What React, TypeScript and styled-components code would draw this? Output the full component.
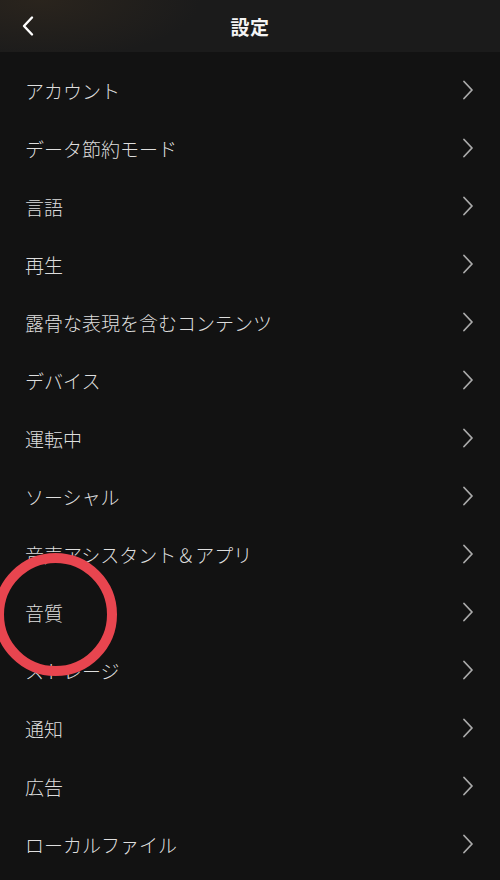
import React, { ReactElement } from 'react';
import styled, { createGlobalStyle } from 'styled-components';

const GlobalStyle = createGlobalStyle`
  html, body {
    margin: 0;
    padding: 0;
    background: #121212;
  }
  body {
    font-family: "Noto Sans CJK JP", "Noto Sans", sans-serif;
  }
`;

const StyledScreen = styled.div`
  position: relative;
  width: 500px;
  height: 880px;
  overflow: hidden;
  background: #121212;
  color: #e6e6e6;
`;

const StyledHeader = styled.header`
  height: 52px;
  display: grid;
  grid-template-columns: 60px 1fr 60px;
  align-items: center;
  background: radial-gradient(ellipse 160px 60px at 40px 0px, #2a241d 0%, rgba(27, 27, 27, 0) 100%), #1b1b1b;
`;

const StyledBackButton = styled.button`
  background: none;
  border: 0;
  padding: 0 0 0 21px;
  height: 52px;
  display: flex;
  align-items: center;
  color: #fff;
  cursor: pointer;
`;

const StyledTitle = styled.h1`
  margin: 0;
  text-align: center;
  font-size: 19px;
  font-weight: 700;
  color: #f4f4f4;
  letter-spacing: 0.5px;
`;

const StyledList = styled.ul`
  list-style: none;
  margin: 0;
  padding: 9px 0 0 0;
`;

const StyledRow = styled.li`
  height: 58px;
  display: flex;
  align-items: center;
  justify-content: space-between;
  padding: 0 25px 0 25px;
`;

const StyledLabel = styled.span`
  font-size: 19px;
  font-weight: 300;
  color: #dedede;
  line-height: 1;
`;

const StyledMarker = styled.div`
  position: absolute;
  left: -6px;
  top: 553px;
  width: 123px;
  height: 123px;
  box-sizing: border-box;
  border-radius: 50%;
  border: 10px solid #e8454f;
  pointer-events: none;
`;

const items = [
  'アカウント',
  'データ節約モード',
  '言語',
  '再生',
  '露骨な表現を含むコンテンツ',
  'デバイス',
  '運転中',
  'ソーシャル',
  '音声アシスタント＆アプリ',
  '音質',
  'ストレージ',
  '通知',
  '広告',
  'ローカルファイル',
];

const Chevron = (): ReactElement => (
  <svg width="14" height="22" viewBox="0 0 14 22" fill="none">
    <path d="M3 2.5 L11 11 L3 19.5" stroke="#aaaaaa" strokeWidth="1.8" strokeLinecap="round" strokeLinejoin="round" />
  </svg>
);

const BackIcon = (): ReactElement => (
  <svg width="14" height="22" viewBox="0 0 14 22" fill="none">
    <path d="M11 2.5 L3 11 L11 19.5" stroke="#ffffff" strokeWidth="2.4" strokeLinecap="round" strokeLinejoin="round" />
  </svg>
);

const App = (): ReactElement => {
  return (
    <>
      <GlobalStyle />
      <StyledScreen>
        <StyledHeader>
          <StyledBackButton aria-label="戻る">
            <BackIcon />
          </StyledBackButton>
          <StyledTitle>設定</StyledTitle>
          <div />
        </StyledHeader>
        <StyledList>
          {items.map((label) => (
            <StyledRow key={label}>
              <StyledLabel>{label}</StyledLabel>
              <Chevron />
            </StyledRow>
          ))}
        </StyledList>
        <StyledMarker />
      </StyledScreen>
    </>
  );
};

export default App;
